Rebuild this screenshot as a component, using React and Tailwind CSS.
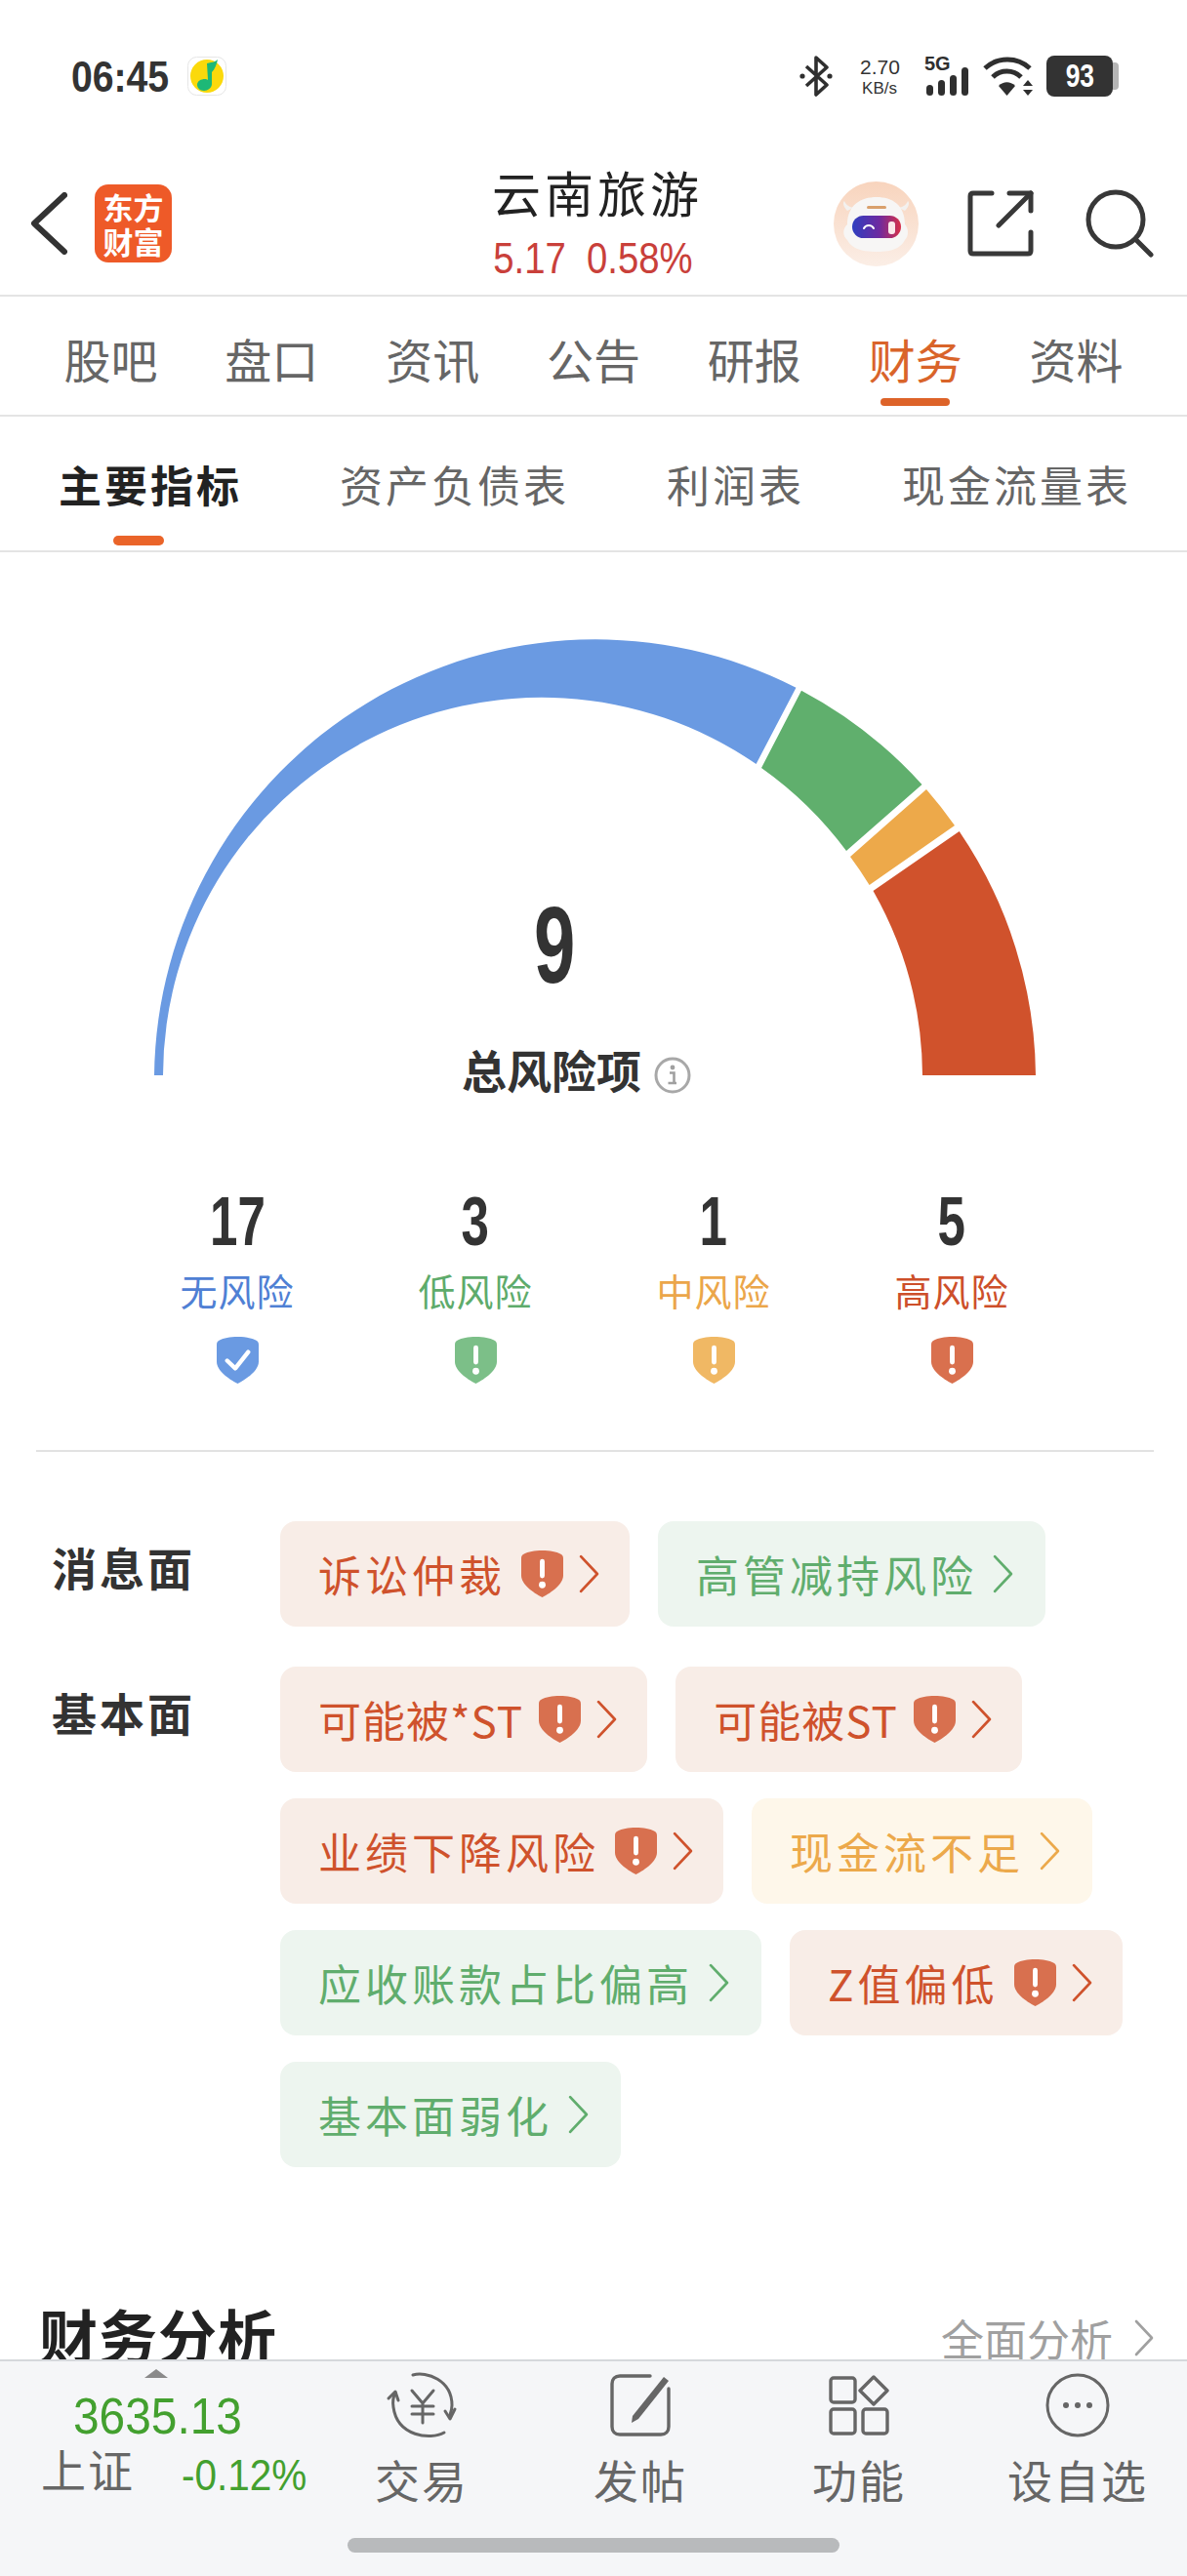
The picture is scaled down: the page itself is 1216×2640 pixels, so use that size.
import React from 'react';

const digits = "inline-block font-['Liberation_Sans',sans-serif]";

const topTabs = ['股吧', '盘口', '资讯', '公告', '研报', '财务', '资料'];
const subTabs = ['主要指标', '资产负债表', '利润表', '现金流量表'];

const stats = [
  { num: '17', label: '无风险', text: 'text-[#4f80d4]', fill: '#6a9ae2', ok: true },
  { num: '3', label: '低风险', text: 'text-[#5eab6b]', fill: '#7cbf88' },
  { num: '1', label: '中风险', text: 'text-[#eba64a]', fill: '#f0b864' },
  { num: '5', label: '高风险', text: 'text-[#cd4f2a]', fill: '#d9704e' },
];

const tones = {
  red: 'bg-[#f8ede7] text-[#cf522c]',
  green: 'bg-[#edf5ef] text-[#60ad6d]',
  orange: 'bg-[#fef7ea] text-[#eca94b]',
};

const newsChips = [
  { label: '诉讼仲裁', tone: 'red', alert: true },
  { label: '高管减持风险', tone: 'green' },
];

const baseChips = [
  { label: '可能被*ST', tone: 'red', alert: true, tight: true },
  { label: '可能被ST', tone: 'red', alert: true, tight: true },
  { label: '业绩下降风险', tone: 'red', alert: true },
  { label: '现金流不足', tone: 'orange' },
  { label: '应收账款占比偏高', tone: 'green' },
  { label: 'Z值偏低', tone: 'red', alert: true },
  { label: '基本面弱化', tone: 'green' },
];

function Shield({ fill, ok, className }) {
  return (
    <svg viewBox="0 0 44 49" className={className}>
      <path
        d="M22 0C30 0 37 1.5 41 3.5C43 4.5 44 6 44 8V26C44 35 32 44 22 49C12 44 0 35 0 26V8C0 6 1 4.5 3 3.5C7 1.5 14 0 22 0Z"
        fill={fill}
      />
      {ok ? (
        <path d="M11 25L19.5 33L33 16" fill="none" stroke="#fff" strokeWidth="4.5" strokeLinecap="round" strokeLinejoin="round" />
      ) : (
        <>
          <rect x="19.5" y="9" width="5" height="20" rx="2.5" fill="#fff" />
          <circle cx="22" cy="36" r="3.5" fill="#fff" />
        </>
      )}
    </svg>
  );
}

function Chevron({ className }) {
  return (
    <svg viewBox="0 0 20 40" className={className} fill="none" stroke="currentColor" strokeWidth="2.6" strokeLinecap="round" strokeLinejoin="round">
      <path d="M2 3L18 20L2 37" />
    </svg>
  );
}

function Chip({ label, tone, alert, tight }) {
  return (
    <div className={`h-[108px] rounded-[16px] pl-[39px] flex items-center ${alert ? 'pr-[31px]' : 'pr-[33px]'} ${tones[tone]}`}>
      <span className={`text-[44px] leading-none ${tight ? 'tracking-[1px]' : 'tracking-[4px]'}`}>{label}</span>
      {alert && <Shield fill="#d8704f" className="w-[43px] h-[48px] ml-[16px]" />}
      <Chevron className="w-[21px] h-[42px] ml-[16px]" />
    </div>
  );
}

function StatusBar() {
  return (
    <div className="h-[156px] flex items-center justify-between pl-[73px] pr-[70px]">
      <div className="flex items-center">
        <div className="w-[99px] whitespace-nowrap">
          <span className={`${digits} origin-left scale-x-[0.87] text-[45px] leading-none font-bold text-[#333]`}>06:45</span>
        </div>
        <svg viewBox="0 0 40 40" className="w-[40px] h-[40px] ml-[20px]">
          <rect x="0.5" y="0.5" width="39" height="39" rx="9" fill="#fff" stroke="#e6e6e6" />
          <circle cx="20" cy="20" r="17" fill="#fbd90b" />
          <path d="M20 7L24 6C26 6 29 5 31 3C30 8 28 13 25 16L25 28C25 32 21 35 17 35C13 35 10 32 10 29C10 25 14 23 18 23C19 23 20 23 21 24Z" fill="#1db877" />
        </svg>
      </div>
      <div className="flex items-center">
        <svg viewBox="0 0 36 42" className="w-[36px] h-[42px]" fill="none" stroke="#2f2f2f" strokeWidth="3.6" strokeLinejoin="round">
          <path d="M8 11L29 30L18 40V2L29 12L8 31" />
          <circle cx="4" cy="21" r="2.6" fill="#2f2f2f" stroke="none" />
          <circle cx="32" cy="21" r="2.6" fill="#2f2f2f" stroke="none" />
        </svg>
        <div className="font-['Liberation_Sans',sans-serif] ml-[27px] w-[40px] text-[#333] text-center">
          <div className="text-[21px] leading-[21px]">2.70</div>
          <div className="text-[17px] leading-[17px] mt-[3px]">KB/s</div>
        </div>
        <div className="ml-[26px] w-[48px] h-[42px] relative">
          <span className="absolute left-0 top-[-2px] text-[20px] leading-[20px] font-bold text-[#2f2f2f] font-['Liberation_Sans',sans-serif]">5G</span>
          <svg viewBox="0 0 48 30" className="absolute left-0 bottom-0 w-[48px] h-[30px]" fill="#2f2f2f">
            <rect x="2" y="18" width="7" height="11" rx="3.5" />
            <rect x="14" y="13" width="7" height="16" rx="3.5" />
            <rect x="26" y="8" width="7" height="21" rx="3.5" />
            <rect x="38" y="0" width="7" height="29" rx="3.5" />
          </svg>
        </div>
        <svg viewBox="0 0 54 42" className="w-[54px] h-[42px] ml-[12px]">
          <g fill="none" stroke="#2f2f2f" strokeWidth="5">
            <path d="M2 13C15 1 35 1 48 13" />
            <path d="M10 22C18 14 31 14 39 22" />
          </g>
          <path d="M16 31C21 26 28 26 33 31L24.5 41Z" fill="#2f2f2f" />
          <path d="M46 25L51 31H41Z" fill="#2f2f2f" />
          <path d="M46 41L51 35H41Z" fill="#2f2f2f" />
        </svg>
        <div className="flex items-center ml-[11px]">
          <div className="w-[68px] h-[42px] rounded-[8px] bg-[#333] text-white text-center">
            <span className={`${digits} scale-x-[0.8] text-[33px] leading-[42px] font-bold`}>93</span>
          </div>
          <div className="w-[6px] h-[28px] rounded-r-[4px] bg-[#b5b5b5]"></div>
        </div>
      </div>
    </div>
  );
}

function Header() {
  return (
    <div className="h-[148px] flex items-center border-b-2 border-[#e4e4e4]">
      <div className="w-[490px] pl-[31px] flex items-center">
        <svg viewBox="0 0 38 64" className="w-[38px] h-[64px]" fill="none" stroke="#333" strokeWidth="6" strokeLinecap="round" strokeLinejoin="round">
          <path d="M35 3L4 32L35 61" />
        </svg>
        <div className="ml-[28px] w-[79px] h-[80px] rounded-[14px] bg-[#ee5a28] text-white text-[31px] leading-[35px] font-bold text-center flex flex-col justify-center">
          <div>东方</div>
          <div>财富</div>
        </div>
      </div>
      <div className="w-[244px] text-center mb-[6px] whitespace-nowrap">
        <div className="text-[50px] leading-[60px] tracking-[4px] text-[#222]">云南旅游</div>
        <div className="mt-[17px] h-[44px] pr-[10px]">
          <span className={`${digits} scale-x-[0.87] text-[44px] leading-[44px] text-[#c9403a]`}>5.17&nbsp;&nbsp;0.58%</span>
        </div>
      </div>
      <div className="flex items-center ml-[120px]">
        <svg viewBox="0 0 87 87" className="w-[87px] h-[87px]">
          <defs>
            <linearGradient id="visor" x1="0" x2="1" y1="0" y2="0">
              <stop offset="0" stopColor="#2f3fc0" />
              <stop offset="0.55" stopColor="#6d2aa0" />
              <stop offset="1" stopColor="#d83048" />
            </linearGradient>
            <linearGradient id="halo" x1="0" x2="0" y1="0" y2="1">
              <stop offset="0" stopColor="#f8d4bd" />
              <stop offset="1" stopColor="#fbeee6" />
            </linearGradient>
          </defs>
          <circle cx="43.5" cy="43.5" r="43.5" fill="url(#halo)" />
          <path d="M14 30C10 26 9 22 11 20C13 25 17 26 20 27ZM73 30C77 26 78 22 76 20C74 25 70 26 67 27Z" fill="#f3f1ef" />
          <path d="M14 44C14 24 28 16 44 16C60 16 73 24 73 44C77 48 77 56 73 60C68 70 56 72 44 72C32 72 19 70 14 60C9 56 9 48 14 44Z" fill="#f7f6f5" />
          <rect x="34" y="25" width="20" height="3" rx="1.5" fill="#d9a06c" />
          <rect x="19" y="35" width="50" height="23" rx="11.5" fill="url(#visor)" />
          <path d="M31 48C33 44 39 44 41 48" fill="none" stroke="#fff" strokeWidth="2" strokeLinecap="round" />
          <rect x="56" y="41" width="7" height="13" rx="3" fill="#fbe8ea" />
        </svg>
        <svg viewBox="0 0 68 68" className="w-[68px] h-[68px] ml-[50px]" fill="none" stroke="#383838" strokeWidth="5" strokeLinecap="round" strokeLinejoin="round">
          <path d="M25 3H6C4 3 3 4 3 6V62C3 64 4 65 6 65H62C64 65 65 64 65 62V43" />
          <path d="M43 3H65V21" />
          <path d="M65 3L32 36" />
        </svg>
        <svg viewBox="0 0 70 70" className="w-[70px] h-[70px] ml-[53px]" fill="none" stroke="#383838" strokeWidth="5" strokeLinecap="round">
          <circle cx="31" cy="31" r="28" />
          <path d="M52 52L67 67" />
        </svg>
      </div>
    </div>
  );
}

function Tabs() {
  return (
    <>
      <div className="h-[123px] px-[31px] grid grid-cols-7 border-b-2 border-[#e4e4e4]">
        {topTabs.map((tab, i) => (
          <div key={tab} className="relative text-center pt-[35px]">
            <span className={`text-[48px] leading-[56px] ${i === 5 ? 'text-[#d9642a]' : 'text-[#666]'}`}>{tab}</span>
            {i === 5 && <div className="absolute left-[47px] bottom-[9px] w-[71px] h-[8px] rounded-full bg-[#dd6329]"></div>}
          </div>
        ))}
      </div>
      <div className="h-[139px] pl-[60px] flex gap-[100px] border-b-2 border-[#e4e4e4]">
        {subTabs.map((tab, i) => (
          <div key={tab} className="relative pt-[41px]">
            <span className={`text-[44px] leading-[56px] tracking-[3px] ${i === 0 ? 'font-bold text-[#222]' : 'text-[#666]'}`}>{tab}</span>
            {i === 0 && <div className="absolute left-[56px] bottom-[5px] w-[52px] h-[10px] rounded-full bg-[#ea6429]"></div>}
          </div>
        ))}
      </div>
    </>
  );
}

function Gauge() {
  return (
    <div className="relative w-[1216px] h-[470px] mt-[73px]">
      <svg viewBox="0 640 1216 470" className="w-[1216px] h-[470px]">
        <path d="M158 1103A452 452 0 0 1 815.5 705.7L774.6 784A388 388 0 0 0 167 1103Z" fill="#6a9ae2" />
        <path d="M821 708.7A452 452 0 0 1 944.5 805L867 873A388 388 0 0 0 780 788Z" fill="#60af6d" />
        <path d="M949 810A452 452 0 0 1 978 847L890.6 908A388 388 0 0 0 871 879Z" fill="#eda94a" />
        <path d="M982.7 853A452 452 0 0 1 1061 1103H945A388 388 0 0 0 894.5 914Z" fill="#d0522c" />
      </svg>
      <div className="absolute left-[0px] top-[270px] w-[1136px] text-center">
        <span className={`${digits} scale-x-[0.68] text-[112px] leading-[120px] font-bold text-[#333]`}>9</span>
      </div>
      <div className="absolute left-[473px] top-[428px] flex items-center">
        <span className="text-[46px] leading-[56px] font-bold text-[#333]">总风险项</span>
        <svg viewBox="0 0 38 38" className="w-[38px] h-[38px] ml-[13px] mt-[14px]">
          <circle cx="19" cy="19" r="17" fill="none" stroke="#a8a8a8" strokeWidth="3" />
          <circle cx="19" cy="11" r="2.4" fill="#a0a0a0" />
          <path d="M16 16.5H20.5V27H23M14.5 27H23" fill="none" stroke="#a0a0a0" strokeWidth="2.6" />
        </svg>
      </div>
    </div>
  );
}

function Stats() {
  return (
    <div className="ml-[121px] w-[976px] grid grid-cols-4 pt-[108px] text-center">
      {stats.map((s) => (
        <div key={s.label} className="flex flex-col items-center">
          <div className={`${digits} scale-x-[0.72] h-[70px] text-[71px] leading-[70px] font-bold text-[#333]`}>{s.num}</div>
          <div className={`mt-[10px] text-[38px] leading-[50px] tracking-[1px] ${s.text}`}>{s.label}</div>
          <Shield fill={s.fill} ok={s.ok} className="w-[43px] h-[48px] mt-[23px]" />
        </div>
      ))}
    </div>
  );
}

function ChipRow({ title, chips, className }) {
  return (
    <div className={`flex ${className}`}>
      <div className="w-[287px] pl-[53px] pt-[16px] text-[46px] leading-[60px] tracking-[3px] font-bold text-[#333]">{title}</div>
      <div className="w-[895px] flex flex-wrap gap-x-[29px] gap-y-[27px]">
        {chips.map((c) => (
          <Chip key={c.label} {...c} />
        ))}
      </div>
    </div>
  );
}

function NavItem({ label, children }) {
  return (
    <div className="flex flex-col items-center">
      <div className="h-[70px] flex items-center">{children}</div>
      <div className="mt-[12px] text-[46px] leading-[56px] tracking-[2px] text-[#666]">{label}</div>
    </div>
  );
}

function BottomNav() {
  return (
    <div className="h-[222px] bg-[#f5f6f8] border-t-2 border-[#d5d8dc] relative">
      <div className="flex">
        <div className="w-[320px] relative h-[150px]">
          <div className="absolute left-[148px] top-[8px] w-0 h-0 border-x-[12px] border-x-transparent border-b-[9px] border-b-[#8a8a8a]"></div>
          <div className={`${digits} absolute left-[75px] top-[28px] origin-left scale-x-[0.92] text-[52px] leading-[56px] text-[#43a02f] whitespace-nowrap`}>3635.13</div>
          <div className="absolute left-[42px] top-[81px] text-[46px] leading-[56px] tracking-[2px] text-[#666]">上证</div>
          <div className={`${digits} absolute left-[186px] top-[91px] origin-left scale-x-[0.92] text-[44px] leading-[52px] text-[#43a02f] whitespace-nowrap`}>-0.12%</div>
        </div>
        <div className="flex-1 grid grid-cols-4 pt-[10px]">
          <NavItem label="交易">
            <svg viewBox="0 0 74 68" className="w-[74px] h-[68px]" fill="none" stroke="#666" strokeWidth="3" strokeLinecap="round" strokeLinejoin="round">
              <path d="M28 3C42 -1 68 8 68 34C68 38 67 41 66 44" />
              <path d="M60 62C46 70 12 66 8 36C7 30 8 25 10 21" />
              <path d="M3 27L10 20L13 29" />
              <path d="M61 40L66 48L71 38" />
              <path d="M27 19L38 32L49 19M38 32V52M27 35H49M27 43H49" />
            </svg>
          </NavItem>
          <NavItem label="发帖">
            <svg viewBox="0 0 64 66" className="w-[64px] h-[66px]" fill="none" stroke="#666" strokeWidth="3.4" strokeLinecap="round" strokeLinejoin="round">
              <path d="M42 3H11C6 3 3 6 3 11V55C3 60 6 63 11 63H53C58 63 61 60 61 55V16" />
              <path d="M24 44L56 4L61 8L30 47L23 51Z" fill="#666" stroke="none" />
            </svg>
          </NavItem>
          <NavItem label="功能">
            <svg viewBox="0 0 62 62" className="w-[62px] h-[62px]" fill="none" stroke="#666" strokeWidth="3.4" strokeLinejoin="round">
              <rect x="2" y="3" width="25" height="25" rx="3" />
              <path d="M46 2L60 16L46 30L32 16Z" />
              <rect x="2" y="35" width="25" height="25" rx="3" />
              <rect x="35" y="35" width="25" height="25" rx="3" />
            </svg>
          </NavItem>
          <NavItem label="设自选">
            <svg viewBox="0 0 66 66" className="w-[66px] h-[66px]">
              <circle cx="33" cy="33" r="31" fill="none" stroke="#666" strokeWidth="3" />
              <circle cx="21" cy="33" r="3" fill="#666" />
              <circle cx="33" cy="33" r="3" fill="#666" />
              <circle cx="45" cy="33" r="3" fill="#666" />
            </svg>
          </NavItem>
        </div>
      </div>
      <div className="absolute left-[356px] top-[181px] w-[504px] h-[15px] rounded-full bg-[#b8babc]"></div>
    </div>
  );
}

export default function App() {
  return (
    <div className="w-[1216px] h-[2640px] flex flex-col bg-white overflow-hidden font-['Noto_Sans_CJK_SC',sans-serif]">
      <StatusBar />
      <Header />
      <Tabs />
      <div className="flex-1 overflow-hidden">
        <Gauge />
        <Stats />
        <div className="ml-[37px] mr-[34px] mt-[68px] h-[2px] bg-[#e2e2e2]"></div>
        <ChipRow title="消息面" chips={newsChips} className="mt-[71px]" />
        <ChipRow title="基本面" chips={baseChips} className="mt-[41px]" />
        <div className="mt-[131px] pl-[40px] pr-[34px] flex items-start justify-between">
          <div className="text-[60px] leading-[80px] tracking-[1px] font-bold text-[#222]">财务分析</div>
          <div className="flex items-center pt-[16px] text-[#a0a0a0]">
            <span className="text-[44px] leading-[56px]">全面分析</span>
            <Chevron className="w-[20px] h-[40px] ml-[22px]" />
          </div>
        </div>
      </div>
      <BottomNav />
    </div>
  );
}
